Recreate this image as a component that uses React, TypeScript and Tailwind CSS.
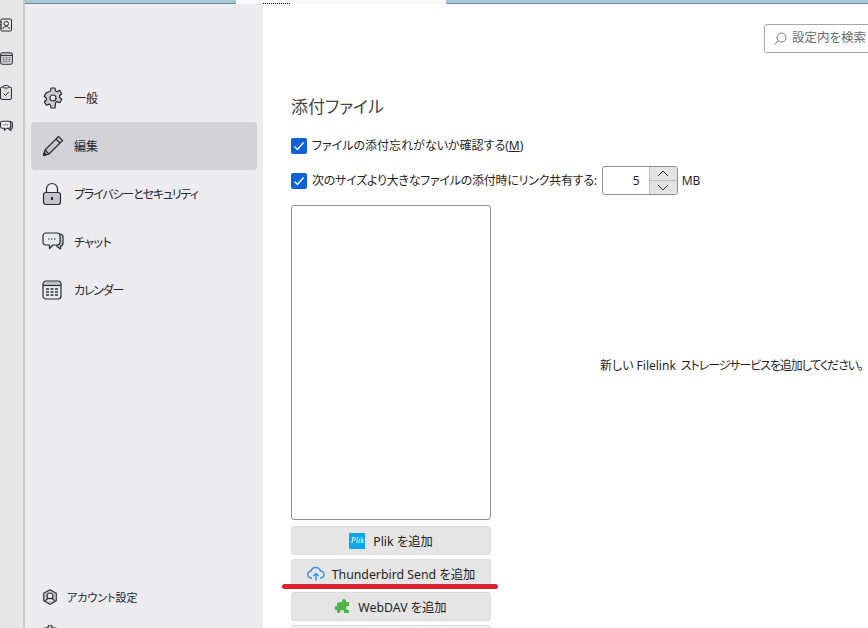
import React from "react";

const jp = { fontFamily: "'Noto Sans','Noto Sans CJK JP',sans-serif" };

function Gear() {
  return (
    <svg width="22" height="22" viewBox="0 0 22 22" fill="none" stroke="#2b2b33" strokeWidth="1.2" strokeLinejoin="round">
      <path d="M9 1h4l.6 3 1.4.7 2.7-1.3 2 3.4-2.2 2 .1 1.5 2.2 2-2 3.4-2.7-1.1-1.4.8L13 21H9l-.6-3.1-1.4-.8-2.7 1.1-2-3.4 2.2-2-.1-1.5-2.2-2 2-3.4L6.9 4.7 8.4 4z" fill="#c9c9ce" />
      <circle cx="11" cy="11" r="3" fill="#ebebf0" />
    </svg>
  );
}
function Pencil() {
  return (
    <svg width="22" height="22" viewBox="0 0 22 22" fill="none" stroke="#2b2b33" strokeWidth="1.2" strokeLinejoin="round">
      <path d="M16.5 1.5l4 4L7 19l-5.5 1.5L3 15z" fill="#c9c9ce" />
      <path d="M14 4l4 4M3 15l4 4" />
      <path d="M1.5 20.5L2.4 17.3l2.3 2.3z" fill="#2b2b33" />
    </svg>
  );
}
function Lock() {
  return (
    <svg width="20" height="24" viewBox="0 0 20 24" fill="none" stroke="#2b2b33" strokeWidth="1.2">
      <path d="M4.5 11V7a5.5 5.5 0 0111 0v4" />
      <rect x="1.5" y="10.5" width="17" height="12" rx="2.5" fill="#c3c3c9" />
      <rect x="9" y="15" width="2" height="3" fill="#2b2b33" stroke="none" />
    </svg>
  );
}
function Chat({ size = 22 }: { size?: number }) {
  return (
    <svg width={size} height={size} viewBox="0 0 22 22" fill="none" stroke="#2b2b33" strokeWidth={size < 20 ? 1.8 : 1.2} strokeLinejoin="round">
      <path d="M15 3h3a3 3 0 013 3v6a3 3 0 01-2.5 3v3L15 15.5z" fill="#c3c3c9" />
      <path d="M4 2h11a3 3 0 013 3v6a3 3 0 01-3 3h-4l-3.500 3.500V14H4a3 3 0 01-3-3V5a3 3 0 013-3z" fill="#ebebf0" />
      <path d="M6 8h1.500M9 8h1.500M12 8h1.500" />
    </svg>
  );
}
function Calendar({ size = 20 }: { size?: number }) {
  return (
    <svg width={size} height={size} viewBox="0 0 20 20" fill="none" stroke="#2b2b33" strokeWidth={size < 20 ? 1.6 : 1.2}>
      <path d="M1.500 1.500h17V5.500h-17z" fill="#c3c3c9" stroke="none" />
      <rect x="1" y="1" width="18" height="18" rx="3" />
      <path d="M1 5.500h18" />
      <path d="M4 9h3M8.500 9h3M13 9h3M4 12h3M8.500 12h3M13 12h3M4 15h3M8.500 15h3M13 15h3" strokeWidth="1.300" />
    </svg>
  );
}
function Account() {
  return (
    <svg width="16" height="16" viewBox="0 0 16 16" fill="none" stroke="#2b2b33" strokeWidth="1.100" strokeLinejoin="round">
      <path d="M8 .8l6.300 3.400v7.600L8 15.200 1.700 11.800V4.200z" fill="#c9c9ce" />
      <circle cx="8" cy="7" r="3" fill="#ebebf0" />
      <path d="M3.500 12c.8-2 2.500-2.600 4.500-2.600s3.700.6 4.500 2.600" fill="#ebebf0" />
    </svg>
  );
}
function Addon() {
  return (
    <svg width="16" height="16" viewBox="0 0 16 16" fill="#c9c9ce" stroke="#2b2b33" strokeWidth="1.100" strokeLinejoin="round">
      <path d="M6 3V2a2 2 0 014 0v1h4v4h-1a2 2 0 000 4h1v4H2v-4h1a2 2 0 000-4H2V3z" />
    </svg>
  );
}
function Contacts() {
  return (
    <svg width="12" height="14" viewBox="0 0 12 14" fill="none" stroke="#2b2b33" strokeWidth="1">
      <rect x="1" y="1" width="10.500" height="12" rx="1" />
      <circle cx="6.300" cy="5.500" r="2.200" />
      <path d="M3 11c.5-2 1.800-2.500 3.300-2.500s2.800.5 3.300 2.500M0 4h2M0 7h2M0 10h2" />
    </svg>
  );
}
function Tasks() {
  return (
    <svg width="12" height="15" viewBox="0 0 12 15" fill="none" stroke="#2b2b33" strokeWidth="1">
      <rect x=".5" y="2" width="11" height="12.500" rx="1.500" fill="#dcdcdc" />
      <rect x="3.500" y=".5" width="5" height="2.500" rx="1" fill="#e6e6e6" />
      <path d="M3.500 8.500l2 2 3.200-3.500" />
    </svg>
  );
}
function Check() {
  return (
    <span className="flex h-4 w-4 shrink-0 items-center justify-center rounded-[2px] bg-[#0f62d6]">
      <svg width="12" height="12" viewBox="0 0 12 12" fill="none" stroke="#fff" strokeWidth="1.300">
        <path d="M1.500 6.500L4.500 9.500 10.500 2.500" />
      </svg>
    </span>
  );
}
function NavItem({ icon, label, active, labelClass = "" }: { icon: React.ReactNode; label: string; active?: boolean; labelClass?: string }) {
  return (
    <div className={`flex h-12 items-center rounded-[4px] pl-[11px] text-[12px] text-[#26262c] ${active ? "bg-[#d2d2d7]" : ""}`}>
      <span className="flex w-[32px] justify-start">{icon}</span>
      <span className={`pt-[2px] ${labelClass}`}>{label}</span>
    </div>
  );
}
function AddButton({ icon, label }: { icon: React.ReactNode; label: string }) {
  return (
    <div className="flex h-[29px] w-[200px] items-center justify-center gap-[7px] rounded-[3px] border border-[#dcdcdc] bg-[#e5e5e5] text-[12.3px] text-[#1f1f1f]">
      {icon}
      <span className="pt-[3px]">{label}</span>
    </div>
  );
}

export default function App() {
  return (
    <div className="flex h-[628px] w-[868px] overflow-hidden bg-white [font-feature-settings:'palt']" style={jp}>
      <div className="flex w-[25px] shrink-0 flex-col items-start gap-[20px] border-r-2 border-[#c9c9c9] bg-[#e6e6e6] pt-[18px]">
        <Contacts />
        <Calendar size={13} />
        <Tasks />
        <Chat size={13} />
      </div>
      <div className="flex min-w-0 flex-1 flex-col">
        <div className="flex h-1 shrink-0 border-b border-[#6f8b96] bg-[#a5c9d8]">
          <div className="ml-[211px] h-[4px] w-[210px] shrink-0 bg-[#f9f9fb]">
            <div className="ml-[27px] w-[27px] border-b border-dotted border-black pt-[3px]" />
          </div>
        </div>
        <div className="flex min-h-0 flex-1">
          <aside className="flex w-[238px] shrink-0 flex-col bg-[#ebebf0] px-[6px] pt-[70px]">
            <NavItem icon={<Gear />} label="一般" />
            <NavItem icon={<Pencil />} label="編集" active />
            <NavItem icon={<Lock />} label="プライバシーとセキュリティ" labelClass="tracking-[-1.15px]" />
            <NavItem icon={<Chat />} label="チャット" labelClass="tracking-[-0.5px]" />
            <NavItem icon={<Calendar />} label="カレンダー" labelClass="tracking-[-1.2px]" />
            <div className="mt-auto -mb-[13px] flex flex-col gap-[20px] pl-[11px] text-[11px] text-[#26262c]">
              <div className="flex h-[16px] items-center gap-[9px]">
                <Account />
                <span className="pt-[2px]">アカウント設定</span>
              </div>
              <div className="flex h-[16px] items-center gap-[9px]">
                <Addon />
                <span className="pt-[2px]">アドオンとテーマ</span>
              </div>
            </div>
          </aside>
          <main className="flex min-w-0 flex-1 flex-col overflow-hidden pl-[28px]">
            <div className="flex justify-end pt-[20px]">
              <div className="-mr-[40px] flex h-[29px] w-[144px] shrink-0 items-center gap-[5px] rounded-[3px] border border-[#a8a8a8] pl-[8px] text-[12.5px] text-[#6b6b6b]">
                <svg width="14" height="14" viewBox="0 0 14 14" fill="none" stroke="#777" strokeWidth="1">
                  <circle cx="8.500" cy="5.500" r="4.500" />
                  <path d="M5.200 8.800L1.500 12.500" />
                </svg>
                <span className="whitespace-nowrap">設定内を検索</span>
              </div>
            </div>
            <h2 className="mt-[42px] text-[17px] font-normal leading-[24px] text-[#444]">添付ファイル</h2>
            <div className="mt-[18px] flex h-[20px] items-center gap-[5px] text-[12px] text-[#1f1f1f]">
              <Check />
              <span>
                ファイルの添付忘れがないか確認する(<span className="underline">M</span>)
              </span>
            </div>
            <div className="mt-[11px] flex h-[30px] items-center gap-[5px] text-[12px] text-[#1f1f1f]">
              <Check />
              <span className="whitespace-nowrap tracking-[-0.25px]">次のサイズより大きなファイルの添付時にリンク共有する:</span>
              <div className="flex h-[29px] w-[76px] shrink-0 items-center overflow-hidden rounded-[3px] border border-[#8f8f8f]">
                <span className="flex-1 pr-[9px] text-right text-[12px]">5</span>
                <div className="flex h-full w-[28px] flex-col border-l border-[#bdbdbd]">
                  <span className="flex flex-1 items-center justify-center border-b border-[#bdbdbd] bg-[#e3e3e3]">
                    <svg width="12" height="7" viewBox="0 0 12 7" fill="none" stroke="#333" strokeWidth="1"><path d="M1 6l5-5 5 5" /></svg>
                  </span>
                  <span className="flex flex-1 items-center justify-center bg-[#e3e3e3]">
                    <svg width="12" height="7" viewBox="0 0 12 7" fill="none" stroke="#333" strokeWidth="1"><path d="M1 1l5 5 5-5" /></svg>
                  </span>
                </div>
              </div>
              <span className="-ml-[1px]">MB</span>
            </div>
            <div className="mt-[10px] flex">
              <div className="flex shrink-0 flex-col gap-[4px]">
                <div className="h-[315px] w-[200px] rounded-[3px] border border-[#8f8f8f]" />
                <div className="relative mt-[2px] flex flex-col gap-[4px]">
                  <AddButton
                    label="Plik を追加"
                    icon={
                      <span className="mr-[1px] flex h-4 w-4 items-center justify-center bg-[#0ea5e9] text-[8px] italic text-white" style={{ fontFamily: "'Liberation Serif',serif" }}>
                        Plik
                      </span>
                    }
                  />
                  <AddButton
                    label="Thunderbird Send を追加"
                    icon={
                      <svg width="18" height="16" viewBox="0 0 18 16" fill="none" stroke="#3b8fe8" strokeWidth="1.500" strokeLinejoin="round">
                        <path d="M5 12H4.500a3.500 3.500 0 01-.5-7A5 5 0 0113.500 5a3.500 3.500 0 010 7H13" />
                        <path d="M9 14.500V7.500M6.500 10L9 7.500l2.500 2.500" />
                      </svg>
                    }
                  />
                  <AddButton
                    label="WebDAV を追加"
                    icon={
                      <svg width="16" height="16" viewBox="0 0 16 16" fill="#4fb548">
                        <path d="M5 3h2V2a2 2 0 014 0v1h3v4h-1a2 2 0 000 4h1v3H9v-1a2 2 0 00-4 0v1H2v-3H1a2 2 0 010-4h1V4z" />
                      </svg>
                    }
                  />
                  <div className="h-[29px] w-[200px] rounded-[3px] border border-[#dcdcdc] bg-[#f0f0f0]" />
                  <div className="absolute left-[-9px] top-[58px] h-[5px] w-[216px] rounded-full bg-[#d8212c]" />
                </div>
              </div>
              <div className="flex h-[322px] shrink-0 items-center self-start pl-[109px]">
                <span className="whitespace-nowrap text-[12px] text-[#1f1f1f]">
                  新しい Filelink <span className="ml-[2px] tracking-[-1.1px]">ストレージサービスを追加してください。</span>
                </span>
              </div>
            </div>
          </main>
        </div>
      </div>
    </div>
  );
}
